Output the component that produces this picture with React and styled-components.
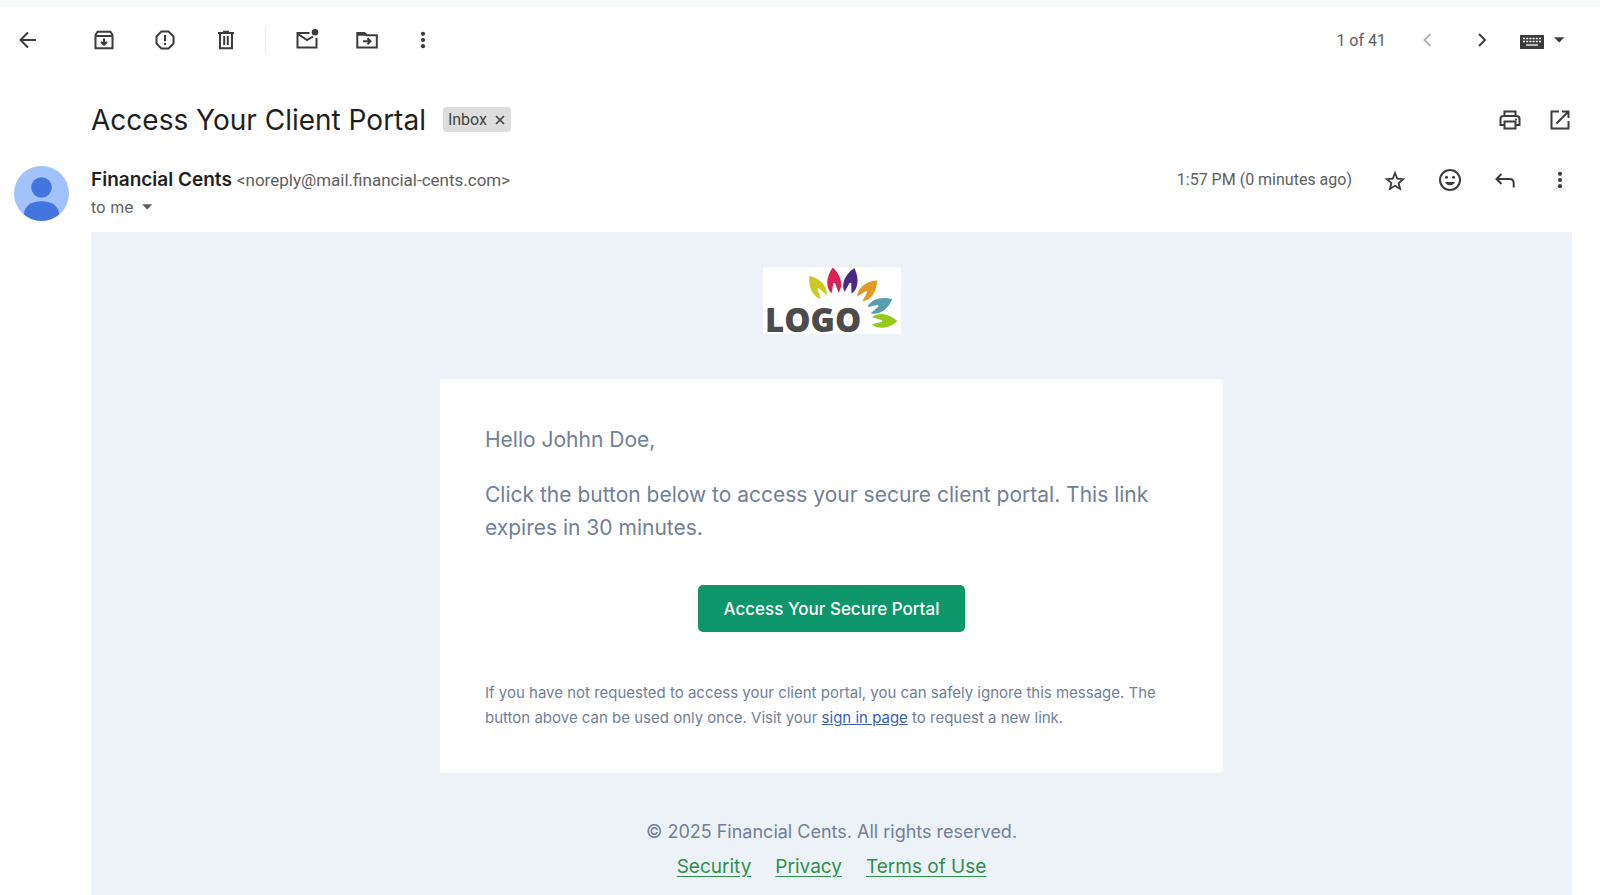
import React from "react";
import styled, { createGlobalStyle } from "styled-components";

const App = () => {
    return (
        <>
        <GlobalStyle />
        <Page>
            <Toolbar>
                <ToolGroup>
                    <IconButton aria-label="Back"><BackIcon /></IconButton>
                </ToolGroup>
                <ToolGroup $start={52} $gap={37}>
                    <IconButton aria-label="Archive"><ArchiveIcon /></IconButton>
                    <IconButton aria-label="Report spam"><SpamIcon /></IconButton>
                    <IconButton aria-label="Delete"><TrashIcon /></IconButton>
                </ToolGroup>
                <Divider />
                <ToolGroup $gap={36}>
                    <IconButton aria-label="Mark as unread"><UnreadIcon /></IconButton>
                    <IconButton aria-label="Move to"><MoveIcon /></IconButton>
                    <IconButton aria-label="More" $narrow><MoreIcon /></IconButton>
                </ToolGroup>
                <Pager>
                    <Count>1 of 41</Count>
                    <IconButton aria-label="Newer" disabled><ChevronIcon d="M14.5 6L8.5 12l6 6" /></IconButton>
                    <IconButton aria-label="Older"><ChevronIcon d="M9 6l6 6-6 6" /></IconButton>
                </Pager>
                <InputTools aria-label="Select input tool"><KeyboardIcon /><CaretIcon /></InputTools>
            </Toolbar>

            <Message>
                <SubjectRow>
                    <Subject>Access Your Client Portal</Subject>
                    <Label>Inbox <LabelClose aria-label="Remove label Inbox"><CloseIcon /></LabelClose></Label>
                    <Actions $gap={26}>
                        <IconButton aria-label="Print"><PrintIcon /></IconButton>
                        <IconButton aria-label="Open in new window"><OpenIcon /></IconButton>
                    </Actions>
                </SubjectRow>

                <Avatar />
                <Sender>
                    <SenderRow>
                        <Name>Financial Cents</Name>
                        <Email>&lt;noreply@mail.financial-cents.com&gt;</Email>
                        <Actions $gap={31}>
                            <Time>1:57 PM (0 minutes ago)</Time>
                            <IconButton aria-label="Star"><StarIcon /></IconButton>
                            <IconButton aria-label="Add reaction"><SmileIcon /></IconButton>
                            <IconButton aria-label="Reply"><ReplyIcon /></IconButton>
                            <IconButton aria-label="More"><MoreIcon /></IconButton>
                        </Actions>
                    </SenderRow>
                    <ToMe>to me <CaretIcon /></ToMe>
                </Sender>

                <Body>
                    <Logo />
                    <Card>
                        <Text>Hello Johhn Doe,</Text>
                        <Text>Click the button below to access your secure client portal. This link expires in 30 minutes.</Text>
                        <PortalButton>Access Your Secure Portal</PortalButton>
                        <Note>
                            If you have not requested to access your client portal, you can safely ignore this message. The
                            button above can be used only once. Visit your <a href="#signin">sign in page</a> to request a new link.
                        </Note>
                    </Card>
                    <Copyright>© 2025 Financial Cents. All rights reserved.</Copyright>
                    <FooterLinks>
                        <a href="#security">Security</a>
                        <a href="#privacy">Privacy</a>
                        <a href="#terms">Terms of Use</a>
                    </FooterLinks>
                </Body>
            </Message>
        </Page>
        </>
    )
}

// icons
const BackIcon = () => (
    <Icon><path d="M20 12H5M12 4.5L4.5 12l7.5 7.5" /></Icon>
)
const ArchiveIcon = () => (
    <Icon>
        <path d="M3.5 7L5.5 3.8h13L20.5 7v13.2h-17zM3.5 8h17M12 10.5v6M9 13.8l3 3 3-3" />
    </Icon>
)
const SpamIcon = () => (
    <Icon>
        <path d="M8.4 3.5h7.2l4.9 4.9v7.2l-4.9 4.9H8.4l-4.9-4.9V8.4zM12 7v6.3M12 15v2" />
    </Icon>
)
const TrashIcon = () => (
    <Icon>
        <path d="M4 5h16M9 3.7h6M6 5.5v14.7h12V5.5M10.2 8v9M13.8 8v9" />
    </Icon>
)
const UnreadIcon = () => (
    <Icon>
        <path d="M14.5 5H2.5v14.5h19V10M3 6l9 6 6-3.5" />
        <circle cx="20" cy="4.2" r="3.3" fill="currentColor" stroke="none" />
    </Icon>
)
const MoveIcon = () => (
    <Icon>
        <path d="M2.3 5h7.2l2.3 2.3h10v12.2H2.3zM8 13.3h7M12.5 10.2l3 3.1-3 3.1" />
        <path d="M2.3 4.5h7.2l2.5 3.3H2.3z" fill="currentColor" stroke="none" />
    </Icon>
)
const MoreIcon = () => (
    <Icon>
        <g fill="currentColor" stroke="none">
            <circle cx="12" cy="5.8" r="2.1" />
            <circle cx="12" cy="12" r="2.1" />
            <circle cx="12" cy="18.2" r="2.1" />
        </g>
    </Icon>
)
const ChevronIcon = ({ d }) => <Icon><path d={d} /></Icon>
const KeyboardIcon = () => (
    <Icon>
        <path d="M0 7h24v14H0z" fill="currentColor" stroke="none" />
        <path d="M3 10.5h18M3 13.5h18" stroke="#fff" strokeWidth="1.3" strokeDasharray="2 1.2" />
        <path d="M6 17h12" stroke="#fff" strokeWidth="1.3" />
    </Icon>
)
const CaretIcon = () => (
    <Icon><path d="M6 9.2h10.4l-5.2 5.4z" fill="currentColor" stroke="none" /></Icon>
)
const CloseIcon = () => (
    <Icon $size={12}><path d="M4 4l16 16M20 4L4 20" strokeWidth="3.2" /></Icon>
)
const PrintIcon = () => (
    <Icon>
        <path d="M6.5 8V3.5h11V8M6.5 17H2.5V11q0-3 3-3h13q3 0 3 3v6h-4M6.5 13.5h11v7h-11z" />
        <circle cx="18" cy="11.5" r="1" fill="currentColor" stroke="none" />
    </Icon>
)
const OpenIcon = () => (
    <Icon><path d="M11 3.5H3.5v17h17V13M14 3.5h6.5V10M20 4L8.5 15.5" /></Icon>
)
const StarIcon = () => (
    <Icon>
        <path strokeWidth="1.8" d="M12 5l2.2 5.6 6 .5-4.600 3.900 1.5 5.9L12 17.700l-5.100 3.200 1.5-5.9-4.600-3.900 6-.5z" />
    </Icon>
)
const SmileIcon = () => (
    <Icon>
        <circle cx="12" cy="12" r="10" />
        <g fill="currentColor" stroke="none">
            <circle cx="8.5" cy="9.3" r="1.5" />
            <circle cx="15.5" cy="9.3" r="1.5" />
            <path d="M7 14h10Q15.5 17.2 12 17.2T7 14z" />
        </g>
    </Icon>
)
const ReplyIcon = () => (
    <Icon><path d="M8.5 6L3.5 11l5 5M4 11h12.5q4.2 0 4.2 4.2v4.2" /></Icon>
)

const Avatar = () => (
    <AvatarSvg viewBox="0 0 55 55" role="img" aria-label="Financial Cents">
        <circle cx="27.5" cy="27.5" r="27.5" fill="#a1c2fa" />
        <circle cx="27.5" cy="21.5" r="10.3" fill="#4374e0" />
        <path d="M10 48.5C10 40.5 17 35.3 27.5 35.3S45 40.5 45 48.5Q37.5 55 27.5 55T10 48.5z" fill="#4374e0" />
    </AvatarSvg>
)

const petals = [
    { x: 54, y: 20, angle: -34, color: "#c9cb25" },
    { x: 71, y: 14, angle: -5, color: "#dc1f56" },
    { x: 88, y: 14, angle: 14, color: "#4b2884" },
    { x: 105, y: 23, angle: 43, color: "#e09a25" },
    { x: 117, y: 38, angle: 65, color: "#569fac" },
    { x: 121, y: 54, angle: 91, color: "#95c91f" },
]

const Logo = () => (
    <LogoSvg viewBox="0 0 138 67" role="img" aria-label="Logo">
        <rect width="138" height="67" fill="#fff" />
        <LogoText x="2" y="65">LOGO</LogoText>
        {petals.map((petal) => (
            <g key={petal.color} transform={`translate(${petal.x} ${petal.y}) rotate(${petal.angle})`}>
                <path d="M-3.5 12C-8.5 7-8.5-4 0-13.5C8.5-4 8.5 7 3.5 12L0.8 2H-0.8z" fill={petal.color} />
            </g>
        ))}
    </LogoSvg>
)


const GlobalStyle = createGlobalStyle`
  body {
    margin: 0;
    background-color: #fff;
    color: #1f1f1f;
    font-family: "Inter", "Liberation Sans", sans-serif;
  }

  button {
    font-family: inherit;
    color: inherit;
    background: none;
    border: 0;
    padding: 0;
    cursor: pointer;
  }
`

const Page = styled.div`
display: flex;
flex-direction: column;
min-height: 100vh;
box-sizing: border-box;
border-top: 7px solid #f6faf9;
`

const Toolbar = styled.header`
display: flex;
align-items: center;
height: 66px;
padding: 0 28px 0 16px;
color: #3c3c3c;
`

const ToolGroup = styled.div`
display: flex;
gap: ${(props) => props.$gap || 0}px;
margin-left: ${(props) => props.$start || 0}px;
`

const Divider = styled.div`
width: 1px;
height: 26px;
margin: 0 29px 0 27px;
background-color: #ececec;
`

const IconButton = styled.button`
display: flex;
justify-content: center;
width: ${(props) => props.$narrow ? 16 : 24}px;

&:disabled {
    color: #b4b4b4;
}

svg {
    flex-shrink: 0;
}
`

const Icon = styled.svg.attrs({ viewBox: "0 0 24 24", "aria-hidden": true })`
display: block;
width: ${(props) => props.$size || 24}px;
height: ${(props) => props.$size || 24}px;
fill: none;
stroke: currentColor;
stroke-width: 2;
`

const Pager = styled.div`
display: flex;
align-items: center;
gap: 30px;
margin-left: auto;
`

const Count = styled.span`
font-family: "Roboto", sans-serif;
font-size: 16px;
color: #5e5e5e;
`

const InputTools = styled.button`
display: flex;
gap: 4px;
margin-left: 26px;
`

const Message = styled.main`
flex: 1;
display: grid;
grid-template-columns: 55px 1fr;
grid-template-rows: auto auto 1fr;
column-gap: 22px;
padding: 0 28px 0 14px;
`

const SubjectRow = styled.div`
grid-column: 2;
display: flex;
align-items: center;
height: 93px;
`

const Subject = styled.h1`
margin: 0;
font-size: 28px;
font-weight: 400;
`

const Label = styled.span`
display: flex;
align-items: center;
gap: 7px;
height: 25px;
margin-left: 17px;
padding: 0 5px;
border-radius: 4px;
background-color: #ddd;
font-family: "Roboto", sans-serif;
font-size: 16px;
color: #444;
`

const LabelClose = styled.button`
display: flex;
`

const Actions = styled.div`
display: flex;
align-items: center;
gap: ${(props) => props.$gap}px;
margin-left: auto;
color: #3c3c3c;
`

const AvatarSvg = styled.svg`
display: block;
width: 55px;
height: 55px;
`

const Sender = styled.div`
height: 66px;
`

const SenderRow = styled.div`
display: flex;
align-items: center;
height: 27px;
`

const Name = styled.span`
font-size: 19px;
font-weight: 600;
`

const Email = styled.span`
margin-left: 5px;
font-family: "Roboto", sans-serif;
font-size: 17px;
color: #5e5e5e;
`

const Time = styled.span`
font-family: "Roboto", sans-serif;
font-size: 16px;
color: #5e5e5e;
`

const ToMe = styled.button`
display: flex;
align-items: center;
height: 28px;
font-size: 16px;
color: #5e5e5e;
gap: 2px;
`

const Body = styled.section`
grid-column: 2;
display: flex;
flex-direction: column;
align-items: center;
padding: 35px 20px 12px;
background-color: #edf2f8;
color: #718096;
`

const LogoSvg = styled.svg`
width: 138px;
height: 67px;
overflow: visible;
`

const LogoText = styled.text`
font-family: "Open Sans", sans-serif;
font-size: 33px;
font-weight: 800;
fill: #4d4b4c;
`

const Card = styled.article`
box-sizing: border-box;
width: 100%;
max-width: 783px;
margin-top: 45px;
padding: 44px 45px 43px;
border-radius: 4px;
background-color: #fff;
`

const Text = styled.p`
margin: 0 0 22px;
font-size: 21px;
line-height: 33px;
`

const PortalButton = styled.button`
display: block;
height: 47px;
margin: 41px auto 48px;
padding: 0 26px;
border-radius: 5px;
background-color: #0c9669;
color: #fff;
font-size: 17px;
font-weight: 500;
`

const Note = styled.p`
margin: 0;
font-size: 15px;
line-height: 25px;

a {
    color: #3a5fb5;
}
`

const Copyright = styled.p`
margin: 47px 0 0;
font-size: 18px;
line-height: 24px;
`

const FooterLinks = styled.nav`
display: flex;
gap: 24px;
margin-top: 9px;
font-size: 19px;
line-height: 28px;

a {
    color: #2f8f4e;
    text-underline-offset: 3px;
}
`

export default App;
